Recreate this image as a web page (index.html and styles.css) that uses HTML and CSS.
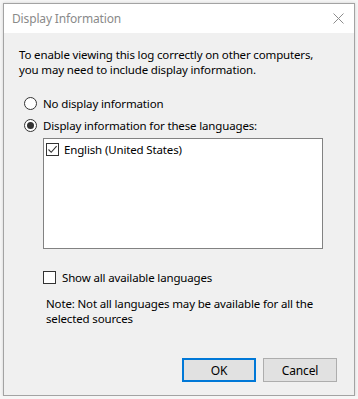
FILE: index.html
```html
<!DOCTYPE html>
<html>
<head lang="en">
    <meta charset="UTF-8">
    <title>Display Information</title>
    <link rel="stylesheet" href="styles.css">
</head>
<body>
<div class="window">
    <div class="titlebar">
        <span class="title">Display Information</span>
        <a class="close" href="javascript:void(0)">
            <svg width="11" height="11" viewBox="0 0 11 11"><path d="M0.5 0.5L10.5 10.5M10.5 0.5L0.5 10.5" stroke="#8c8c8c" stroke-width="1" fill="none"/></svg>
        </a>
    </div>
    <div class="content">
        <p class="intro">To enable viewing this log correctly on other computers,<br>you may need to include display information.</p>
        <label class="row radio-row"><span class="radio"></span>No display information</label>
        <label class="row radio-row"><span class="radio checked"></span>Display information for these languages:</label>
        <div class="listbox">
            <div class="item">
                <span class="check checked">
                    <svg width="11" height="11" viewBox="0 0 11 11"><path d="M1.5 5.5L4.2 8.3L9.6 2.2" stroke="#333" stroke-width="1.1" fill="none"/></svg>
                </span>
                English (United States)
            </div>
        </div>
        <label class="row show-all"><span class="check"></span>Show all available languages</label>
        <p class="note">Note: Not all languages may be available for all the<br>selected sources</p>
        <div class="buttons">
            <a class="btn default" href="javascript:void(0)">OK</a>
            <a class="btn" href="javascript:void(0)">Cancel</a>
        </div>
    </div>
</div>
</body>
</html>
```

FILE: styles.css
```css
*{
    margin: 0;
    padding: 0;
    box-sizing: border-box;
}
body{
    background: #f6f6f6;
    font-family: "Noto Sans", "Open Sans", sans-serif;
    font-size: 11.5px;
    letter-spacing: -0.15px;
    color: #000;
}
a{
    text-decoration: none;
    color: #000;
}
.window{
    margin: 3px 0 0 3px;
    width: 352px;
    height: 393px;
    border: 1px solid #a3a3a3;
    box-shadow: 0 0 3px rgba(0,0,0,0.15);
    background: #f0f0f0;
    display: flex;
    flex-direction: column;
}
.titlebar{
    height: 29px;
    background: #fff;
    display: flex;
    align-items: center;
    padding-left: 8px;
}
.title{
    flex: 1;
    color: #8a8a8a;
    font-size: 12px;
}
.close{
    display: flex;
    margin-right: 10px;
}
.content{
    flex: 1;
    padding: 14px 17px 0 15px;
    display: flex;
    flex-direction: column;
}
.intro{
    line-height: 15px;
}
.row{
    display: flex;
    align-items: center;
    height: 22px;
}
.radio-row{
    padding-left: 5px;
}
.radio-row:first-of-type{
    margin-top: 15px;
}
.radio{
    width: 13px;
    height: 13px;
    border: 1px solid #333;
    border-radius: 50%;
    background: #fff;
    margin-right: 6px;
    display: flex;
    align-items: center;
    justify-content: center;
}
.radio.checked:after{
    content: "";
    width: 7px;
    height: 7px;
    border-radius: 50%;
    background: #333;
}
.listbox{
    margin: 2px 0 0 24px;
    width: 280px;
    height: 111px;
    border: 1px solid #828282;
    background: #fff;
    padding: 2px 0 0 2px;
}
.item{
    display: flex;
    align-items: center;
    height: 14px;
    margin-top: 1px;
}
.check{
    width: 13px;
    height: 13px;
    border: 1px solid #333;
    background: #fff;
    margin-right: 6px;
    display: flex;
    align-items: center;
    justify-content: center;
}
.item .check{
    margin-right: 5px;
}
.show-all{
    margin: 17px 0 0 24px;
}
.note{
    margin: 8px 0 0 27px;
    line-height: 15px;
}
.buttons{
    margin-top: 32px;
    display: flex;
    justify-content: flex-end;
    gap: 7px;
}
.btn{
    width: 74px;
    height: 24px;
    border: 1px solid #adadad;
    background: #e1e1e1;
    display: flex;
    align-items: center;
    justify-content: center;
    font-size: 12px;
}
.btn.default{
    border: 2px solid #0078d7;
}
```
